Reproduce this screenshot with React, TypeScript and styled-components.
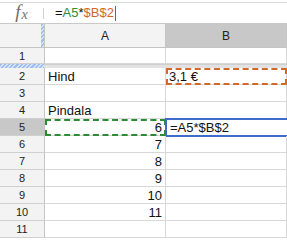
import styled, { createGlobalStyle, css } from "styled-components";

const GlobalStyle = createGlobalStyle`
  html, body {
    margin: 0;
    padding: 0;
    background: #fff;
  }
  body {
    font-family: "Liberation Sans", Arial, sans-serif;
  }
`;

type Mark = "none" | "green" | "orange" | "active";

const rows: { n: number; a?: string; aRight?: boolean; b?: string; aMark?: Mark; bMark?: Mark }[] = [
  { n: 2, a: "Hind", b: "3,1 €", bMark: "orange" },
  { n: 3 },
  { n: 4, a: "Pindala" },
  { n: 5, a: "6", aRight: true, aMark: "green", b: "=A5*$B$2", bMark: "active" },
  { n: 6, a: "7", aRight: true },
  { n: 7, a: "8", aRight: true },
  { n: 8, a: "9", aRight: true },
  { n: 9, a: "10", aRight: true },
  { n: 10, a: "11", aRight: true },
  { n: 11 },
];

function App() {
  return (
    <Page>
      <GlobalStyle />
      <TopStrip />
      <FormulaBar>
        <FxLabel>
          f<FxSub>x</FxSub>
        </FxLabel>
        <Divider />
        <Formula>
          =<Ref $color="#2e8b3a">A5</Ref>*<Ref $color="#d2692a">$B$2</Ref>
          <Caret />
        </Formula>
      </FormulaBar>

      <Row $height={24}>
        <Corner>
          <FreezeHandle />
        </Corner>
        <ColHeader>A</ColHeader>
        <ColHeader $selected>B</ColHeader>
      </Row>

      <Row $height={16}>
        <RowHeader>1</RowHeader>
        <Cell />
        <Cell />
      </Row>

      <FreezeBand>
        <FreezeStripe />
        <FreezeGray />
      </FreezeBand>

      {rows.map((r) => (
        <Row key={r.n} $height={17}>
          <RowHeader $selected={r.n === 5}>{r.n}</RowHeader>
          <Cell $right={r.aRight} $mark={r.aMark}>
            {r.a}
          </Cell>
          <Cell $mark={r.bMark}>{r.b}</Cell>
        </Row>
      ))}
    </Page>
  );
}

export default App;

const Page = styled.div`
  width: 287px;
  height: 240px;
  overflow: hidden;
  background: #fff;
`;

const TopStrip = styled.div`
  height: 2px;
  border-bottom: 1px solid #dadada;
`;

const FormulaBar = styled.div`
  display: flex;
  align-items: center;
  height: 20px;
  border-bottom: 1px solid #c9c9c9;
`;

const FxLabel = styled.div`
  width: 43px;
  display: flex;
  align-items: baseline;
  justify-content: center;
  font-family: "Liberation Serif", "Times New Roman", serif;
  font-style: italic;
  font-size: 19px;
  color: #6f6f6f;
  line-height: 20px;
`;

const FxSub = styled.span`
  font-size: 14px;
  margin-left: 1px;
  position: relative;
  top: 1px;
`;

const Divider = styled.div`
  width: 1px;
  height: 11px;
  background: #d0d0d0;
`;

const Formula = styled.div`
  display: flex;
  align-items: center;
  padding-left: 11px;
  font-size: 13px;
  color: #111;
  line-height: 20px;
`;

const Ref = styled.span<{ $color: string }>`
  color: ${(p) => p.$color};
`;

const Caret = styled.span`
  display: inline-block;
  width: 1px;
  height: 15px;
  margin-left: 1px;
  background: #b0541e;
`;

const Row = styled.div<{ $height: number }>`
  display: grid;
  grid-template-columns: 45px 121px 121px;
  height: ${(p) => p.$height}px;
`;

const Corner = styled.div`
  display: flex;
  justify-content: flex-end;
  background: #f3f3f3;
  border-right: 1px solid #c4c4c4;
  border-bottom: 1px solid #c4c4c4;
`;

const stripes = css`
  background: repeating-linear-gradient(
    135deg,
    #9dbcf0 0 1.5px,
    #d5e2f8 1.5px 3px
  );
`;

const FreezeHandle = styled.div`
  width: 3px;
  ${stripes}
`;

const ColHeader = styled.div<{ $selected?: boolean }>`
  display: flex;
  align-items: center;
  justify-content: center;
  font-size: 12px;
  color: #222;
  background: ${(p) => (p.$selected ? "#c8c8c8" : "#f3f3f3")};
  border-right: 1px solid #c4c4c4;
  border-bottom: 1px solid #c4c4c4;
`;

const RowHeader = styled.div<{ $selected?: boolean }>`
  display: flex;
  align-items: center;
  justify-content: center;
  font-size: 11px;
  color: #222;
  background: ${(p) => (p.$selected ? "#c8c8c8" : "#f3f3f3")};
  border-right: 1px solid #c4c4c4;
  border-bottom: 1px solid #d0d0d0;
`;

const markStyles: Record<Mark, ReturnType<typeof css> | string> = {
  none: "",
  green: css`
    outline: 2px dashed #2f8a36;
    outline-offset: -2px;
  `,
  orange: css`
    outline: 2px dashed #d2692a;
    outline-offset: -2px;
  `,
  active: css`
    outline: 2px solid #3f6ccb;
    outline-offset: -1px;
    padding-left: 4px;
    margin-right: -20px;
    background: #fff;
  `,
};

const Cell = styled.div<{ $right?: boolean; $mark?: Mark }>`
  display: flex;
  align-items: center;
  justify-content: ${(p) => (p.$right ? "flex-end" : "flex-start")};
  padding: 0 3px;
  font-size: 13px;
  color: #111;
  white-space: nowrap;
  border-right: 1px solid #d8d8d8;
  border-bottom: 1px solid #d8d8d8;
  ${(p) => markStyles[p.$mark ?? "none"]}
`;

const FreezeBand = styled.div`
  display: grid;
  grid-template-columns: 44px 1fr;
  height: 4px;
`;

const FreezeStripe = styled.div`
  ${stripes}
`;

const FreezeGray = styled.div`
  background: #e2e2e2;
  border-top: 1px solid #cfcfcf;
`;
